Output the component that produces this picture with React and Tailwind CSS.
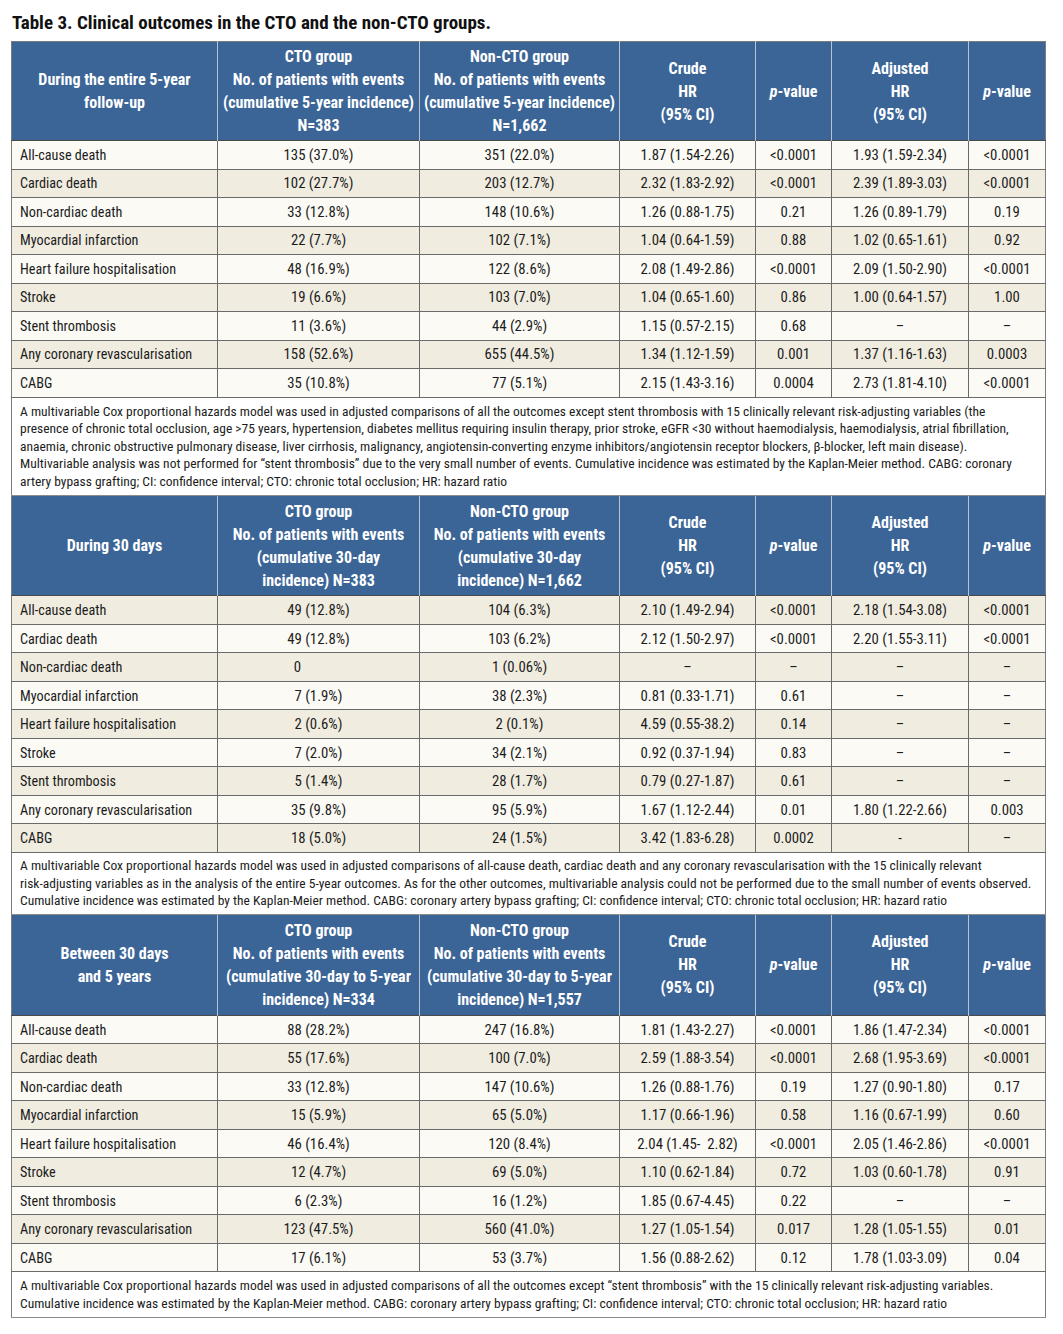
const t1 = [
  ["All-cause death", "135 (37.0%)", "351 (22.0%)", "1.87 (1.54-2.26)", "<0.0001", "1.93 (1.59-2.34)", "<0.0001"],
  ["Cardiac death", "102 (27.7%)", "203 (12.7%)", "2.32 (1.83-2.92)", "<0.0001", "2.39 (1.89-3.03)", "<0.0001"],
  ["Non-cardiac death", "33 (12.8%)", "148 (10.6%)", "1.26 (0.88-1.75)", "0.21", "1.26 (0.89-1.79)", "0.19"],
  ["Myocardial infarction", "22 (7.7%)", "102 (7.1%)", "1.04 (0.64-1.59)", "0.88", "1.02 (0.65-1.61)", "0.92"],
  ["Heart failure hospitalisation", "48 (16.9%)", "122 (8.6%)", "2.08 (1.49-2.86)", "<0.0001", "2.09 (1.50-2.90)", "<0.0001"],
  ["Stroke", "19 (6.6%)", "103 (7.0%)", "1.04 (0.65-1.60)", "0.86", "1.00 (0.64-1.57)", "1.00"],
  ["Stent thrombosis", "11 (3.6%)", "44 (2.9%)", "1.15 (0.57-2.15)", "0.68", "–", "–"],
  ["Any coronary revascularisation", "158 (52.6%)", "655 (44.5%)", "1.34 (1.12-1.59)", "0.001", "1.37 (1.16-1.63)", "0.0003"],
  ["CABG", "35 (10.8%)", "77 (5.1%)", "2.15 (1.43-3.16)", "0.0004", "2.73 (1.81-4.10)", "<0.0001"],
];

const t2 = [
  ["All-cause death", "49 (12.8%)", "104 (6.3%)", "2.10 (1.49-2.94)", "<0.0001", "2.18 (1.54-3.08)", "<0.0001"],
  ["Cardiac death", "49 (12.8%)", "103 (6.2%)", "2.12 (1.50-2.97)", "<0.0001", "2.20 (1.55-3.11)", "<0.0001"],
  ["Non-cardiac death", "0", "1 (0.06%)", "–", "–", "–", "–"],
  ["Myocardial infarction", "7 (1.9%)", "38 (2.3%)", "0.81 (0.33-1.71)", "0.61", "–", "–"],
  ["Heart failure hospitalisation", "2 (0.6%)", "2 (0.1%)", "4.59 (0.55-38.2)", "0.14", "–", "–"],
  ["Stroke", "7 (2.0%)", "34 (2.1%)", "0.92 (0.37-1.94)", "0.83", "–", "–"],
  ["Stent thrombosis", "5 (1.4%)", "28 (1.7%)", "0.79 (0.27-1.87)", "0.61", "–", "–"],
  ["Any coronary revascularisation", "35 (9.8%)", "95 (5.9%)", "1.67 (1.12-2.44)", "0.01", "1.80 (1.22-2.66)", "0.003"],
  ["CABG", "18 (5.0%)", "24 (1.5%)", "3.42 (1.83-6.28)", "0.0002", "-", "–"],
];

const t3 = [
  ["All-cause death", "88 (28.2%)", "247 (16.8%)", "1.81 (1.43-2.27)", "<0.0001", "1.86 (1.47-2.34)", "<0.0001"],
  ["Cardiac death", "55 (17.6%)", "100 (7.0%)", "2.59 (1.88-3.54)", "<0.0001", "2.68 (1.95-3.69)", "<0.0001"],
  ["Non-cardiac death", "33 (12.8%)", "147 (10.6%)", "1.26 (0.88-1.76)", "0.19", "1.27 (0.90-1.80)", "0.17"],
  ["Myocardial infarction", "15 (5.9%)", "65 (5.0%)", "1.17 (0.66-1.96)", "0.58", "1.16 (0.67-1.99)", "0.60"],
  ["Heart failure hospitalisation", "46 (16.4%)", "120 (8.4%)", "2.04 (1.45-  2.82)", "<0.0001", "2.05 (1.46-2.86)", "<0.0001"],
  ["Stroke", "12 (4.7%)", "69 (5.0%)", "1.10 (0.62-1.84)", "0.72", "1.03 (0.60-1.78)", "0.91"],
  ["Stent thrombosis", "6 (2.3%)", "16 (1.2%)", "1.85 (0.67-4.45)", "0.22", "–", "–"],
  ["Any coronary revascularisation", "123 (47.5%)", "560 (41.0%)", "1.27 (1.05-1.54)", "0.017", "1.28 (1.05-1.55)", "0.01"],
  ["CABG", "17 (6.1%)", "53 (3.7%)", "1.56 (0.88-2.62)", "0.12", "1.78 (1.03-3.09)", "0.04"],
];

const PVal = () => (
  <span>
    <span className="italic">p</span>-value
  </span>
);

function HeaderRow({ first, cto, nonCto, h }) {
  const th = "border-r border-[#b8c2d0] last:border-r-0 text-center align-middle px-0 font-bold text-white text-[16px] leading-[23px] whitespace-nowrap";
  const lines = (arr) => arr.map((l, i) => <div key={i}>{l}</div>);
  return (
    <tr className={`bg-[#3b6597] border-b border-[#4a4a4a] ${h}`}>
      <th className={th}>{lines(first)}</th>
      <th className={th}>{lines(cto)}</th>
      <th className={th}>{lines(nonCto)}</th>
      <th className={th}>{lines(["Crude", "HR", "(95% CI)"])}</th>
      <th className={th}><PVal /></th>
      <th className={th}>{lines(["Adjusted", "HR", "(95% CI)"])}</th>
      <th className={th}><PVal /></th>
    </tr>
  );
}

function DataRows({ rows, startLight }) {
  return rows.map((r, i) => {
    const light = (i % 2 === 0) === startLight;
    return (
      <tr key={i} className={`h-[28.5px] ${light ? "bg-[#fbfaf5]" : "bg-[#f0ece0]"}`}>
        {r.map((c, j) => (
          <td
            key={j}
            className={`border-b border-r border-[#6a6a6a] last:border-r-0 align-middle leading-[18px] text-[#1c1c1c] whitespace-pre ${
              j === 0 ? "text-left pl-[8px] text-[14.2px]" : "text-center text-[14.8px]"
            } ${c === "0" ? "pr-[42px]" : ""}`}
          >
            {c}
          </td>
        ))}
      </tr>
    );
  });
}

function NoteRow({ lines, pad }) {
  return (
    <tr className="bg-white">
      <td colSpan={7} className={`border-b border-[#8c8c8c] px-[8px] ${pad} text-[13.5px] leading-[17.6px] text-[#1c1c1c] text-left whitespace-nowrap`}>
        {lines.map((l, i) => (
          <div key={i}>{l}</div>
        ))}
      </td>
    </tr>
  );
}

export default function App() {
  return (
    <div className="bg-white w-[1063px] min-h-[1334px] font-['Roboto_Condensed',sans-serif]">
      <div className="pl-[12px] pt-[10px] h-[41px] text-[19px] leading-[25px] font-bold text-[#111]">
        Table 3. Clinical outcomes in the CTO and the non-CTO groups.
      </div>
      <table className="ml-[11px] w-[1034px] table-fixed border-collapse border border-[#7c7c7c]">
        <colgroup>
          <col className="w-[206px]" />
          <col className="w-[202px]" />
          <col className="w-[200px]" />
          <col className="w-[136px]" />
          <col className="w-[76px]" />
          <col className="w-[137px]" />
          <col className="w-[77px]" />
        </colgroup>
        <tbody>
          <HeaderRow
            h="h-[99px]"
            first={["During the entire 5-year", "follow-up"]}
            cto={["CTO group", "No. of patients with events", "(cumulative 5-year incidence)", "N=383"]}
            nonCto={["Non-CTO group", "No. of patients with events", "(cumulative 5-year incidence)", "N=1,662"]}
          />
          <DataRows rows={t1} startLight={true} />
          <NoteRow
            pad="pt-[5px] pb-[5px]"
            lines={[
              "A multivariable Cox proportional hazards model was used in adjusted comparisons of all the outcomes except stent thrombosis with 15 clinically relevant risk-adjusting variables (the",
              "presence of chronic total occlusion, age >75 years, hypertension, diabetes mellitus requiring insulin therapy, prior stroke, eGFR <30 without haemodialysis, haemodialysis, atrial fibrillation,",
              "anaemia, chronic obstructive pulmonary disease, liver cirrhosis, malignancy, angiotensin-converting enzyme inhibitors/angiotensin receptor blockers, β-blocker, left main disease).",
              "Multivariable analysis was not performed for “stent thrombosis” due to the very small number of events. Cumulative incidence was estimated by the Kaplan-Meier method. CABG: coronary",
              "artery bypass grafting; CI: confidence interval; CTO: chronic total occlusion; HR: hazard ratio",
            ]}
          />
          <HeaderRow
            h="h-[100px]"
            first={["During 30 days"]}
            cto={["CTO group", "No. of patients with events", "(cumulative 30-day", "incidence) N=383"]}
            nonCto={["Non-CTO group", "No. of patients with events", "(cumulative 30-day", "incidence) N=1,662"]}
          />
          <DataRows rows={t2} startLight={false} />
          <NoteRow
            pad="pt-[4px] pb-[4px]"
            lines={[
              "A multivariable Cox proportional hazards model was used in adjusted comparisons of all-cause death, cardiac death and any coronary revascularisation with the 15 clinically relevant",
              "risk-adjusting variables as in the analysis of the entire 5-year outcomes. As for the other outcomes, multivariable analysis could not be performed due to the small number of events observed.",
              "Cumulative incidence was estimated by the Kaplan-Meier method. CABG: coronary artery bypass grafting; CI: confidence interval; CTO: chronic total occlusion; HR: hazard ratio",
            ]}
          />
          <HeaderRow
            h="h-[101px]"
            first={["Between 30 days", "and 5 years"]}
            cto={["CTO group", "No. of patients with events", "(cumulative 30-day to 5-year", "incidence) N=334"]}
            nonCto={["Non-CTO group", "No. of patients with events", "(cumulative 30-day to 5-year", "incidence) N=1,557"]}
          />
          <DataRows rows={t3} startLight={true} />
          <NoteRow
            pad="pt-[5px] pb-[5px]"
            lines={[
              "A multivariable Cox proportional hazards model was used in adjusted comparisons of all the outcomes except “stent thrombosis” with the 15 clinically relevant risk-adjusting variables.",
              "Cumulative incidence was estimated by the Kaplan-Meier method. CABG: coronary artery bypass grafting; CI: confidence interval; CTO: chronic total occlusion; HR: hazard ratio",
            ]}
          />
        </tbody>
      </table>
    </div>
  );
}
